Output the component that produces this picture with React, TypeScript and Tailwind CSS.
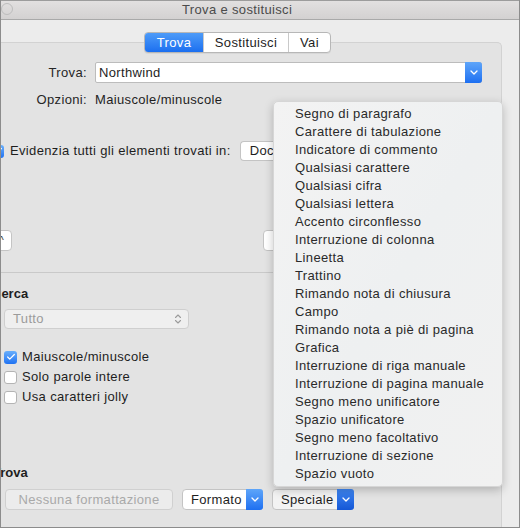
import { Check } from 'lucide-react';

const SPECIALE = [
  'Segno di paragrafo',
  'Carattere di tabulazione',
  'Indicatore di commento',
  'Qualsiasi carattere',
  'Qualsiasi cifra',
  'Qualsiasi lettera',
  'Accento circonflesso',
  'Interruzione di colonna',
  'Lineetta',
  'Trattino',
  'Rimando nota di chiusura',
  'Campo',
  'Rimando nota a piè di pagina',
  'Grafica',
  'Interruzione di riga manuale',
  'Interruzione di pagina manuale',
  'Segno meno unificatore',
  'Spazio unificatore',
  'Segno meno facoltativo',
  'Interruzione di sezione',
  'Spazio vuoto',
];

function Chevron() {
  return (
    <svg width="8" height="5" viewBox="0 0 8 5" fill="none">
      <path d="M1 1l3 3 3-3" stroke="white" strokeWidth="1.3" strokeLinecap="round" strokeLinejoin="round" />
    </svg>
  );
}

function BlueArrow({ dark = false }: { dark?: boolean }) {
  return (
    <div
      className={`w-[17px] h-full flex items-center justify-center rounded-r-[3px] ${
        dark ? 'bg-gradient-to-b from-[#3f86f2] to-[#1457d6]' : 'bg-gradient-to-b from-[#5ea5f9] to-[#1d6ff1]'
      }`}
    >
      <Chevron />
    </div>
  );
}

function Checkbox({ checked }: { checked?: boolean }) {
  return checked ? (
    <div className="w-[13px] h-[13px] rounded-[3px] bg-gradient-to-b from-[#68aefb] to-[#1f72f2] flex items-center justify-center shrink-0">
      <Check className="w-[10px] h-[10px] text-white" strokeWidth={3} />
    </div>
  ) : (
    <div className="w-[13px] h-[13px] rounded-[3px] bg-white border border-[#b4b4b4] shrink-0" />
  );
}

export default function App() {
  return (
    <div
      className="w-[520px] h-[528px] relative overflow-hidden bg-[#ececec] border-x border-b border-[#8c8c8c] flex flex-col text-[13px] tracking-[0.35px] text-[#1e1e1e]"
      style={{ fontFamily: '"Liberation Sans", Arial, sans-serif' }}
    >
      {/* Title bar */}
      <div className="h-[20px] shrink-0 bg-gradient-to-b from-[#e2e0e0] to-[#d3d1d1] border-t border-b border-t-[#9c9c9c] border-b-[#a9a9a9] relative">
        <div className="absolute left-0 top-[2px] w-[12px] h-[12px] rounded-full border border-[#bdbdbd]" />
        <div className="ml-[181px] leading-[18px] text-[#4b4b4b]">Trova e sostituisci</div>
      </div>

      {/* Tabs */}
      <div className="pt-[12px] relative z-10 -mb-[11px]">
        <div className="ml-[143px] w-[187px] h-[21px] flex rounded-[4px] border border-[#b7b7b7] bg-white overflow-hidden shadow-[0_1px_0_rgba(0,0,0,0.05)]">
          <div className="w-[58px] bg-gradient-to-b from-[#4d9bf8] to-[#1b6ff0] text-white flex items-center justify-center leading-none">Trova</div>
          <div className="w-[85px] border-l border-[#c9c9c9] flex items-center justify-center leading-none">Sostituisci</div>
          <div className="flex-1 border-l border-[#c9c9c9] flex items-center justify-center leading-none">Vai</div>
        </div>
      </div>

      {/* Group box */}
      <div className="w-[501px] flex-1 bg-[#e3e3e3] border-t border-r border-[#d2d2d2] rounded-tr-[5px] flex flex-col">
        <div className="mt-[19px] flex items-center h-[21px]">
          <div className="w-[86px] text-right text-[#262626]">Trova:</div>
          <div className="ml-[8px] w-[387px] h-[21px] flex bg-white border border-[#bcbcbc] rounded-[2px]">
            <div className="flex-1 pl-[3px] leading-[19px]">Northwind</div>
            <div className="-my-px -mr-px">
              <BlueArrow />
            </div>
          </div>
        </div>

        <div className="mt-[9px] flex h-[16px] leading-[16px]">
          <div className="w-[86px] text-right text-[#262626]">Opzioni:</div>
          <div className="ml-[8px]">Maiuscole/minuscole</div>
        </div>

        <div className="mt-[33px] flex items-center h-[20px] -ml-[10px]">
          <Checkbox checked />
          <span className="ml-[6px] whitespace-nowrap">Evidenzia tutti gli elementi trovati in:</span>
          <div className="ml-[9px] h-[20px] w-[33px] bg-white border border-r-0 border-[#c4c4c4] rounded-l-[4px] pl-[9px] leading-[18px] whitespace-nowrap overflow-hidden">Doc</div>
        </div>

        <div className="mt-[69px] flex h-[21px]">
          <div className="-ml-[21px] w-[32px] h-[21px] bg-white border border-[#c4c4c4] rounded-[4px] flex items-center justify-end pr-[7px] text-[10px] leading-none">^</div>
          <div className="ml-[251px] w-[60px] h-[21px] bg-white border border-[#c4c4c4] rounded-[4px]" />
        </div>

        <div className="mt-[21px] h-px w-[490px] bg-[#c9c9c9]" />

        <div className="mt-[13px] h-[16px] leading-[16px] font-bold -ml-[9px] tracking-normal">Cerca</div>

        <div className="mt-[7px] ml-[3px] w-[185px] h-[20px] bg-[#efefef] border border-[#cfcfcf] rounded-[4px] flex items-center justify-between pl-[8px] pr-[6px]">
          <span className="text-[#9b9b9b]">Tutto</span>
          <svg width="8" height="12" viewBox="0 0 8 12" fill="none">
            <path d="M1.5 4.5L4 2l2.5 2.5M1.5 7.5L4 10l2.5-2.5" stroke="#9b9b9b" strokeWidth="1.1" strokeLinecap="round" strokeLinejoin="round" />
          </svg>
        </div>

        <div className="mt-[18px] flex flex-col ml-[3px]">
          {[
            ['Maiuscole/minuscole', true],
            ['Solo parole intere', false],
            ['Usa caratteri jolly', false],
          ].map(([label, checked]) => (
            <div key={label as string} className="h-[20px] flex items-center">
              <Checkbox checked={checked as boolean} />
              <span className="ml-[5px]">{label as string}</span>
            </div>
          ))}
        </div>

        <div className="mt-[58px] h-[16px] leading-[16px] font-bold -ml-[8px] tracking-normal">Trova</div>

        <div className="mt-[8px] flex h-[21px]">
          <div className="ml-[4px] w-[168px] h-[21px] rounded-[4px] border border-[#d0d0d0] bg-[#ececec] text-[#a9a9a9] flex items-center justify-center">Nessuna formattazione</div>
          <div className="ml-[9px] w-[81px] h-[21px] rounded-[4px] border border-[#c4c4c4] bg-white flex">
            <div className="flex-1 pl-[8px] leading-[19px]">Formato</div>
            <div className="-my-px -mr-px">
              <BlueArrow />
            </div>
          </div>
          <div className="ml-[9px] w-[82px] h-[21px] rounded-[4px] border border-[#c4c4c4] bg-[#f3f3f3] flex">
            <div className="flex-1 pl-[8px] leading-[19px]">Speciale</div>
            <div className="-my-px -mr-px">
              <BlueArrow dark />
            </div>
          </div>
        </div>
      </div>

      {/* Speciale popup menu */}
      <div className="absolute left-[272px] top-[101px] w-[230px] h-[386px] rounded-[5px] bg-gradient-to-br from-[#f3f3f3] via-[#eef0f1] to-[#f1f1f1] border border-[#d6d6d6] shadow-[0_3px_10px_rgba(0,0,0,0.22)] pt-[3px] z-20">
        {SPECIALE.map((item) => (
          <div key={item} className="h-[18px] leading-[18px] pl-[21px] text-[#2a2a2a]">
            {item}
          </div>
        ))}
      </div>
    </div>
  );
}
